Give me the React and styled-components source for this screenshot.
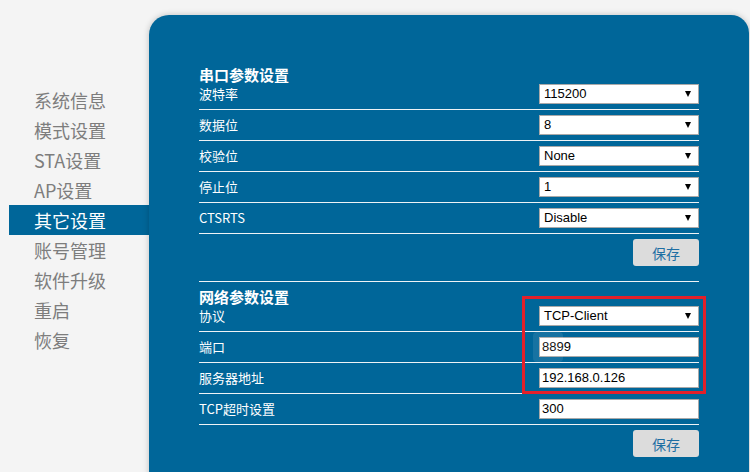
import React from "react";
import styled, { createGlobalStyle } from "styled-components";

const GlobalStyle = createGlobalStyle`
  html, body {
    margin: 0;
    padding: 0;
    height: 100%;
    overflow: hidden;
    background: #f4f4f4;
  }
  body {
    font-family: "Noto Sans CJK SC", "Noto Sans", sans-serif;
  }
`;

const Page = styled.div`
  display: flex;
  align-items: flex-start;
  padding: 15px 1px 0 9px;
`;

const Sidebar = styled.ul`
  list-style: none;
  margin: 0;
  padding: 70px 0 0;
  width: 140px;
  flex-shrink: 0;
`;

const NavItem = styled.li`
  height: 30px;
  line-height: 30px;
  padding-left: 25px;
  font-size: 18px;
  color: ${(props) => (props.$active ? "#ffffff" : "#7d7d7d")};
  background: ${(props) => (props.$active ? "#006699" : "transparent")};
`;

const Panel = styled.div`
  flex: 1;
  min-height: 520px;
  background: #006699;
  border-radius: 20px 18px 0 0;
  box-shadow: 0 0 6px rgba(0, 0, 0, 0.22);
  padding: 52px 50px 0;
  box-sizing: border-box;
`;

const Section = styled.div`
  margin-top: ${(props) => (props.$gap ? "7px" : "0")};
`;

const Title = styled.div`
  font-size: 15px;
  font-weight: 700;
  line-height: 15px;
  color: #ffffff;
  margin-bottom: -3px;
`;

const Row = styled.div`
  display: flex;
  align-items: center;
  justify-content: space-between;
  height: 30px;
  border-bottom: 1px solid #eef3f6;
`;

const Label = styled.span`
  font-size: 13px;
  line-height: 15px;
  color: #ffffff;
  margin-bottom: 2px;
`;

const SelectBox = styled.div`
  position: relative;
  width: 160px;
  height: 20px;
  box-sizing: border-box;
  border: 1px solid #a9a9a9;
  background: #ffffff;
  padding-left: 4px;
  font-family: "Liberation Sans", Arial, sans-serif;
  font-size: 13px;
  line-height: 18px;
  color: #000000;
`;

const Arrow = styled.span`
  position: absolute;
  right: 7px;
  top: 6px;
  width: 0;
  height: 0;
  border-left: 3.5px solid transparent;
  border-right: 3.5px solid transparent;
  border-top: 6px solid #000000;
`;

const TextInput = styled.div`
  width: 160px;
  height: 20px;
  box-sizing: border-box;
  border: 1px solid #a9a9a9;
  background: #ffffff;
  padding-left: 2px;
  font-family: "Liberation Sans", Arial, sans-serif;
  font-size: 13px;
  line-height: 18px;
  color: #000000;
`;

const ButtonRow = styled.div`
  display: flex;
  justify-content: flex-end;
  padding: 5px 0 15px;
  border-bottom: ${(props) => (props.$last ? "none" : "1px solid #eef3f6")};
`;

const SaveButton = styled.button`
  width: 66px;
  height: 27px;
  border: none;
  border-radius: 3px;
  background: #dcdcdc;
  color: #1d6ea3;
  font-family: "Noto Sans CJK SC", sans-serif;
  font-size: 14px;
  padding: 0;
`;

const Highlight = styled.div`
  position: relative;
`;

const RedFrame = styled.div`
  position: absolute;
  top: -5px;
  left: 323px;
  right: -7px;
  bottom: 0;
  border: 3px solid #e3202a;
  pointer-events: none;
`;

const CursorGlow = styled.div`
  position: absolute;
  top: 31px;
  left: 334px;
  width: 30px;
  height: 30px;
  border-radius: 4px;
  background: rgba(255, 255, 255, 0.09);
  pointer-events: none;
`;

const navItems = [
  "系统信息",
  "模式设置",
  "STA设置",
  "AP设置",
  "其它设置",
  "账号管理",
  "软件升级",
  "重启",
  "恢复",
];

const serialRows = [
  ["波特率", "115200"],
  ["数据位", "8"],
  ["校验位", "None"],
  ["停止位", "1"],
  ["CTSRTS", "Disable"],
];

const Select = ({ value }) => (
  <SelectBox>
    {value}
    <Arrow />
  </SelectBox>
);

export default function App() {
  return (
    <>
      <GlobalStyle />
      <Page>
        <Sidebar>
          {navItems.map((name) => (
            <NavItem key={name} $active={name === "其它设置"}>
              {name}
            </NavItem>
          ))}
        </Sidebar>
        <Panel>
          <Section>
            <Title>串口参数设置</Title>
            {serialRows.map(([label, value]) => (
              <Row key={label}>
                <Label>{label}</Label>
                <Select value={value} />
              </Row>
            ))}
            <ButtonRow>
              <SaveButton>保存</SaveButton>
            </ButtonRow>
          </Section>
          <Section $gap>
            <Title>网络参数设置</Title>
            <Highlight>
              <Row>
                <Label>协议</Label>
                <Select value="TCP-Client" />
              </Row>
              <Row>
                <Label>端口</Label>
                <TextInput>8899</TextInput>
              </Row>
              <Row>
                <Label>服务器地址</Label>
                <TextInput>192.168.0.126</TextInput>
              </Row>
              <RedFrame />
              <CursorGlow />
            </Highlight>
            <Row>
              <Label>TCP超时设置</Label>
              <TextInput>300</TextInput>
            </Row>
            <ButtonRow $last>
              <SaveButton>保存</SaveButton>
            </ButtonRow>
          </Section>
        </Panel>
      </Page>
    </>
  );
}
